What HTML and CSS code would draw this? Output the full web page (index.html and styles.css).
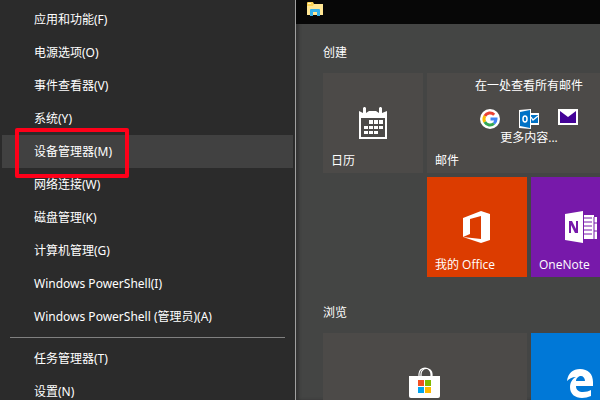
FILE: index.html
```html
<!DOCTYPE html>
<html lang="zh-CN">
<head>
  <meta charset="UTF-8" />
  <meta name="viewport" content="width=device-width, initial-scale=1.0" />
  <title>开始</title>
  <link rel="stylesheet" href="styles.css">
</head>
<body>
  <nav class="menu">
    <button class="item">应用和功能(F)</button>
    <button class="item">电源选项(O)</button>
    <button class="item">事件查看器(V)</button>
    <button class="item">系统(Y)</button>
    <button class="item active">设备管理器(M)<span class="marker"></span></button>
    <button class="item">网络连接(W)</button>
    <button class="item">磁盘管理(K)</button>
    <button class="item">计算机管理(G)</button>
    <button class="item">Windows PowerShell(I)</button>
    <button class="item">Windows PowerShell (管理员)(A)</button>
    <hr class="divider">
    <button class="item">任务管理器(T)</button>
    <button class="item">设置(N)</button>
  </nav>

  <main class="start">
    <div class="topbar">
      <svg width="18" height="16" viewBox="0 0 18 16">
        <path d="M1 1q0-1 1-1h5l1 2h8q1 0 1 1v10H1z" fill="#fcd354"/>
        <path d="M2 1h3v1H2z" fill="#fff6c8"/>
        <path d="M1 4h6l1-2h9v11H1z" fill="#ffe694"/>
        <path d="M4 14V8q0-1 1-1h8q1 0 1 1v6h-3v-4H7v4z" fill="#35b0ea"/>
      </svg>
    </div>

    <section class="group">
      <h2>创建</h2>
      <div class="tiles">
        <a class="tile" href="#">
          <svg class="icon" width="28" height="32" viewBox="0 0 28 32">
            <path d="M0 4l4 2V1l1-1h1l1 1v5l3-2h7l3 2V1l1-1h1l1 1v5l5-2v28H0z" fill="#fff"/>
            <path d="M2 11h24v19H2z" fill="#4c4a48"/>
            <path d="M10 13h4v4h-4zM15 13h4v4h-4zM20 13h4v4h-4zM5 19h4v3H5zM10 19h4v3h-4zM15 19h4v3h-4zM20 19h4v3h-4zM5 24h4v3H5zM10 24h4v3h-4zM15 24h4v3h-4z" fill="#fff"/>
          </svg>
          <span class="label">日历</span>
        </a>
        <a class="tile wide mail" href="#">
          <span>在一处查看所有邮件</span>
          <span class="accounts">
            <svg width="20" height="20" viewBox="0 0 20 20">
              <circle cx="10" cy="10" r="10" fill="#fff"/>
              <g fill="none" stroke-width="3">
                <path d="M4.800 7A6 6 0 0 1 14.200 5.700" stroke="#ea4335"/>
                <path d="M4.800 13A6 6 0 0 1 4.800 7" stroke="#fbbc05"/>
                <path d="M14 14.500A6 6 0 0 1 4.800 13" stroke="#34a853"/>
                <path d="M10.500 10H16a6 6 0 0 1-2 4.500" stroke="#4285f4"/>
              </g>
            </svg>
            <svg width="20" height="20" viewBox="0 0 20 20">
              <path d="M0 1l12-1v4h8v12h-8v4L0 19z" fill="#fff"/>
              <path d="M1 3l10-2v18L1 17zM12 6h7v8h-7z" fill="#0072c6"/>
              <ellipse cx="6" cy="10" rx="2" ry="3" fill="none" stroke="#fff" stroke-width="1.500"/>
              <path d="M12 8l2 3 5-4" fill="none" stroke="#fff" stroke-width="1.300"/>
            </svg>
            <svg width="20" height="20" viewBox="0 0 20 20">
              <path d="M0 0h20v16H0z" fill="#fff"/>
              <path d="M2 2v12h16V2l-8 6z" fill="#430297"/>
            </svg>
          </span>
          <span>更多内容...</span>
          <span class="label">邮件</span>
        </a>
        <a class="tile office" href="#">
          <svg class="icon" width="28" height="32" viewBox="0 0 28 32">
            <path d="M0 7L18 0l9 3v26l-9 3L0 26l18 2V5L7 8v15l-7 3z" fill="#fff"/>
          </svg>
          <span class="label">我的 Office</span>
        </a>
        <a class="tile onenote" href="#">
          <svg class="icon" width="32" height="32" viewBox="0 0 32 32">
            <path d="M0 3l18-3v32L0 29z" fill="#fff"/>
            <path d="M4 22V10h3l4 8v-8h2v12h-3l-4-8v8z" fill="#7719aa"/>
            <path d="M19 4h10v2h3v22H19z" fill="#fff"/>
            <path d="M19 7h8M19 11h8M19 15h8M19 19h8M19 23h8M29 6v22M29 12h3M29 20h3" stroke="#7719aa" fill="none"/>
          </svg>
          <span class="label">OneNote</span>
        </a>
      </div>
    </section>

    <section class="group">
      <h2>浏览</h2>
      <div class="tiles">
        <a class="tile wide" href="#">
          <svg class="icon" width="32" height="32" viewBox="0 0 32 32">
            <path d="M10 10V7a6 6 0 0 1 12 0v3M12 10V7a5 5 0 0 1 11 0v3" fill="none" stroke="#fff" stroke-width="1.200"/>
            <path d="M0 9h31v20q0 2-2 2H2q-2 0-2-2z" fill="#fff"/>
            <path d="M9 13h6v6H9z" fill="#f25022"/>
            <path d="M16 13h6v6h-6z" fill="#7fba00"/>
            <path d="M9 20h6v6H9z" fill="#00a4ef"/>
            <path d="M16 20h6v6h-6z" fill="#ffb900"/>
          </svg>
        </a>
        <a class="tile edge" href="#">
          <svg class="icon" width="28" height="30" viewBox="0 0 28 30">
            <path d="M0 13C1 5 6 1 13 1c8 0 13 5 13 13v4H9c0 4 3 6 7 6 3 0 6-1 8-2v6c-3 1-6 2-9 2C8 30 3 26 3 19c0-4 2-8 6-10-4 0-7 2-9 4zm9 0h9c0-3-2-5-4-5s-5 2-5 5z" fill="#fff"/>
          </svg>
        </a>
      </div>
    </section>
  </main>
</body>
</html>
```
FILE: styles.css
```css
* {
  box-sizing: border-box;
}
body {
  margin: 0;
  height: 100vh;
  display: flex;
  overflow: hidden;
  background: #444544;
  color: white;
  font-family: "Open Sans", "Noto Sans CJK SC", sans-serif;
  font-size: 12px;
  line-height: 16px;
}
.menu {
  flex: none;
  width: 296px;
  padding: 3px 2px;
  background: #2b2b2b;
  border-right: 1px solid #a0a0a0;
  font-family: "Noto Sans", "Noto Sans CJK SC", sans-serif;
}
.item {
  position: relative;
  display: block;
  width: 100%;
  height: 33px;
  padding: 0 32px;
  border: 0;
  background: none;
  color: inherit;
  font: inherit;
  text-align: left;
}
.item.active {
  background: #414141;
}
.marker {
  position: absolute;
  top: -7px;
  left: 13px;
  width: 114px;
  height: 50px;
  border: 4px solid #ff0019;
  border-radius: 2px;
}
.divider {
  height: 1px;
  margin: 4px 8px;
  border: 0;
  background: #808080;
}
.start {
  flex: 1;
  min-width: 0;
  box-shadow: inset 3px 0 3px #333;
}
.topbar {
  height: 24px;
  padding: 2px 10px;
  background: #070707;
}
.group {
  padding: 21px 27px 7px;
}
.group h2 {
  margin: 0 0 12px;
  font-size: 12px;
  font-weight: normal;
  line-height: 16px;
}
.tiles {
  display: grid;
  grid-template-columns: repeat(3, 100px);
  grid-auto-rows: 100px;
  gap: 4px;
}
.tile {
  position: relative;
  display: flex;
  flex-direction: column;
  align-items: center;
  justify-content: center;
  background: #4c4a48;
  color: white;
  text-decoration: none;
}
.wide {
  grid-column: span 2;
}
.office {
  grid-column: 2;
  background: #dc3c00;
}
.onenote {
  background: #7719aa;
}
.edge {
  background: #0078d7;
}
.label {
  position: absolute;
  left: 8px;
  bottom: 4px;
}
.mail {
  justify-content: flex-start;
  padding-top: 5px;
}
.accounts {
  display: flex;
  gap: 19px;
  margin: 15px 0 1px;
}
```
